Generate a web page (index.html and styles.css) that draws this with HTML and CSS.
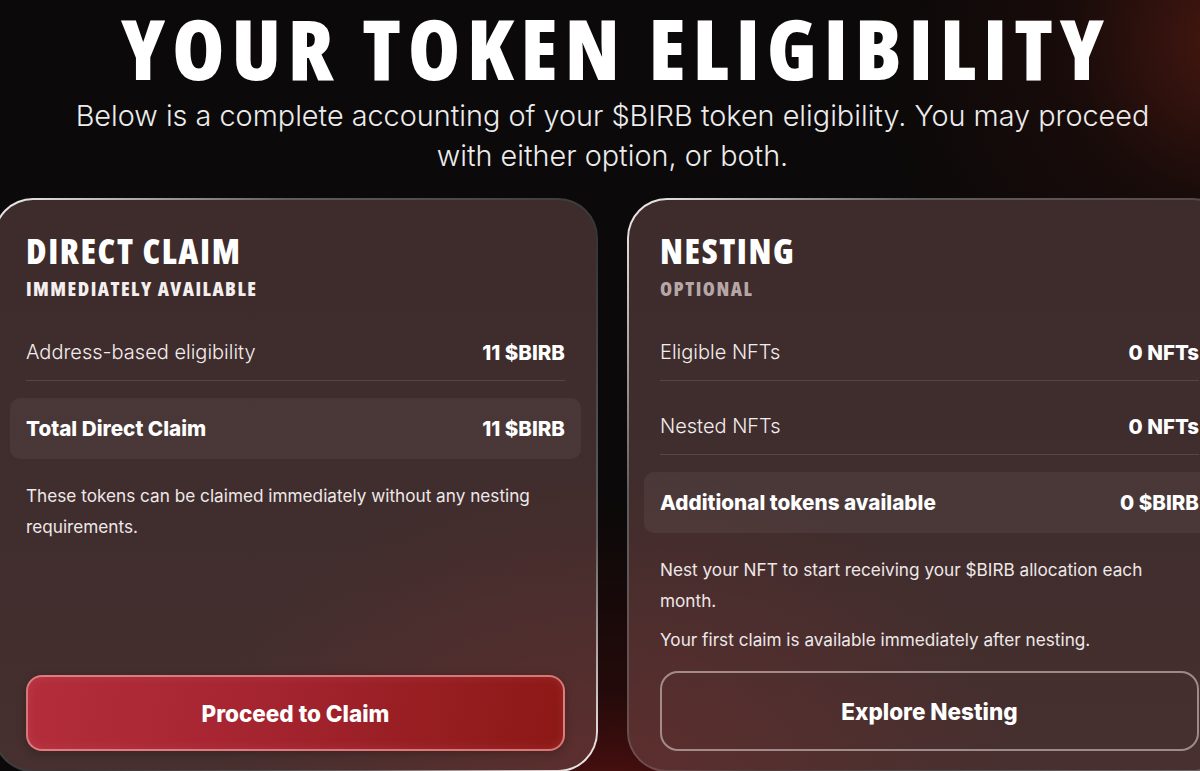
FILE: index.html
```html
<!DOCTYPE html>
<html lang="en">
<head>
<meta charset="utf-8">
<title>Your Token Eligibility</title>
<link rel="stylesheet" href="styles.css">
</head>
<body>
<main class="page">
  <header class="hero">
    <h1 class="hero-title">YOUR TOKEN ELIGIBILITY</h1>
    <p class="hero-sub">Below is a complete accounting of your $BIRB token eligibility. You may proceed with either option, or both.</p>
  </header>
  <section class="cards">
    <article class="card card-left">
      <h2 class="card-title">DIRECT CLAIM</h2>
      <div class="card-tag">IMMEDIATELY AVAILABLE</div>
      <div class="row">
        <span class="row-label">Address-based eligibility</span>
        <strong class="row-value">11 $BIRB</strong>
      </div>
      <div class="total">
        <span class="total-label">Total Direct Claim</span>
        <strong class="row-value">11 $BIRB</strong>
      </div>
      <p class="note">These tokens can be claimed immediately without any nesting requirements.</p>
      <button class="btn btn-primary">Proceed to Claim</button>
    </article>
    <article class="card card-right">
      <h2 class="card-title">NESTING</h2>
      <div class="card-tag card-tag-muted">OPTIONAL</div>
      <div class="row">
        <span class="row-label">Eligible NFTs</span>
        <strong class="row-value">0 NFTs</strong>
      </div>
      <div class="row">
        <span class="row-label">Nested NFTs</span>
        <strong class="row-value">0 NFTs</strong>
      </div>
      <div class="total">
        <span class="total-label">Additional tokens available</span>
        <strong class="row-value">0 $BIRB</strong>
      </div>
      <p class="note">Nest your NFT to start receiving your $BIRB allocation each month.</p>
      <p class="note note-tight">Your first claim is available immediately after nesting.</p>
      <button class="btn btn-outline">Explore Nesting</button>
    </article>
  </section>
</main>
</body>
</html>
```
FILE: styles.css
```css
* { box-sizing: border-box; }

html, body {
  margin: 0;
  width: 1200px;
  height: 771px;
  overflow: hidden;
}

body {
  font-family: "Inter", "Roboto", sans-serif;
  color: #ffffff;
  background:
    radial-gradient(circle at 612px 830px, rgba(120, 20, 20, 0.75) 0, rgba(80, 12, 12, 0.35) 140px, rgba(0, 0, 0, 0) 330px),
    radial-gradient(circle at 1230px 40px, rgba(90, 28, 18, 0.75) 0, rgba(50, 16, 12, 0.35) 160px, rgba(0, 0, 0, 0) 360px),
    #0b0909;
}

.page {
  width: 1239px;
  margin-left: -7px;
}

.hero {
  display: flex;
  flex-direction: column;
  align-items: center;
}

.hero-title {
  margin: 0;
  padding: 0 4px 0 11px;
  font-family: "Open Sans", sans-serif;
  font-weight: 800;
  font-stretch: 75%;
  font-size: 84px;
  line-height: 96px;
  letter-spacing: 7px;
  color: #ffffff;
}

.hero-sub {
  margin: 0;
  max-width: 1100px;
  text-align: center;
  font-weight: 300;
  font-size: 28.8px;
  line-height: 40px;
  color: #ececec;
}

.cards {
  display: flex;
  gap: 29px;
  margin-top: 22px;
}

.card {
  width: 605px;
  height: 574px;
  display: flex;
  flex-direction: column;
  padding: 32px 31px 19px;
  border: 2px solid transparent;
  border-radius: 40px;
}

.card-left {
  background:
    radial-gradient(ellipse 380px 300px at 100% 100%, rgba(110, 45, 45, 0.55), rgba(110, 45, 45, 0) 100%) padding-box,
    linear-gradient(180deg, #3e2b2c 0%, #402d2d 60%, #47302f 100%) padding-box,
    linear-gradient(135deg, rgba(255,255,255,0.95) 0%, rgba(255,255,255,0.35) 25%, rgba(255,255,255,0.18) 55%, rgba(255,255,255,0.35) 80%, rgba(255,255,255,0.95) 100%) border-box;
}

.card-right {
  background:
    radial-gradient(ellipse 380px 300px at 0% 100%, rgba(110, 45, 45, 0.55), rgba(110, 45, 45, 0) 100%) padding-box,
    linear-gradient(180deg, #3e2b2c 0%, #402d2d 60%, #47302f 100%) padding-box,
    linear-gradient(135deg, rgba(255,255,255,0.95) 0%, rgba(255,255,255,0.35) 25%, rgba(255,255,255,0.22) 60%, rgba(255,255,255,0.4) 100%) border-box;
}

.card-title {
  margin: 0;
  font-family: "Open Sans", sans-serif;
  font-weight: 800;
  font-stretch: 75%;
  font-size: 35px;
  line-height: 38px;
  letter-spacing: 1.6px;
  color: #ffffff;
}

.card-tag {
  margin-top: 7px;
  font-family: "Open Sans", sans-serif;
  font-weight: 800;
  font-stretch: 75%;
  font-size: 19.5px;
  line-height: 24px;
  letter-spacing: 1.5px;
  color: #f4eeee;
}

.card-tag-muted {
  color: #b6a7a7;
}

.row {
  display: flex;
  align-items: center;
  justify-content: space-between;
  height: 57px;
  margin-top: 23px;
  border-bottom: 1px solid rgba(255, 255, 255, 0.12);
}

.row + .row {
  margin-top: 17px;
}

.row-label {
  font-weight: 300;
  font-size: 20px;
  color: #f2eded;
}

.row-value {
  font-weight: 800;
  font-size: 20.5px;
  color: #ffffff;
}

.total {
  display: flex;
  align-items: center;
  justify-content: space-between;
  height: 61px;
  margin: 17px -16px 0;
  padding: 0 16px;
  border-radius: 10px;
  background: rgba(255, 255, 255, 0.055);
}

.total-label {
  font-weight: 800;
  font-size: 20.7px;
  color: #ffffff;
}

.note {
  margin: 21px 0 0;
  max-width: 520px;
  font-weight: 400;
  font-size: 17.2px;
  line-height: 31px;
  color: #eee8e8;
}

.note-tight {
  margin-top: 8px;
}

.btn {
  margin-top: auto;
  width: 100%;
  font-family: "Inter", sans-serif;
  font-weight: 800;
  font-size: 22.5px;
  color: #ffffff;
  cursor: pointer;
}

.btn-primary {
  height: 76px;
  border-radius: 16px;
  border: 2px solid rgba(240, 150, 150, 0.75);
  background: linear-gradient(100deg, #b42d3b 0%, #a42430 45%, #8c1815 100%);
  box-shadow: inset 0 0 12px rgba(255, 255, 255, 0.08), 0 2px 10px rgba(0, 0, 0, 0.25);
}

.btn-outline {
  height: 80px;
  border-radius: 18px;
  border: 2px solid rgba(230, 215, 215, 0.55);
  background: transparent;
}
```
